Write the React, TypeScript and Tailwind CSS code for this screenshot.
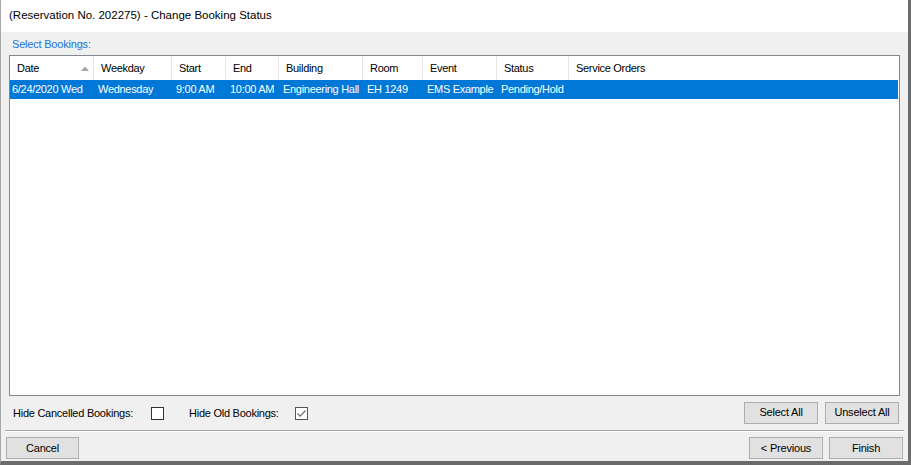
import React from "react";

const columns = [
  { key: "date", label: "Date", width: 84, sort: true },
  { key: "weekday", label: "Weekday", width: 78 },
  { key: "start", label: "Start", width: 54 },
  { key: "end", label: "End", width: 53 },
  { key: "building", label: "Building", width: 84 },
  { key: "room", label: "Room", width: 60 },
  { key: "event", label: "Event", width: 74 },
  { key: "status", label: "Status", width: 72 },
  { key: "orders", label: "Service Orders", width: 0 },
];

const bookings = [
  {
    id: 1,
    date: "6/24/2020 Wed",
    weekday: "Wednesday",
    start: "9:00 AM",
    end: "10:00 AM",
    building: "Engineering Hall",
    room: "EH 1249",
    event: "EMS Example",
    status: "Pending/Hold",
    orders: "",
  },
];

function WinButton({ label, width }: { label: string; width: string }) {
  return (
    <button
      className={`${width} h-[22px] border border-[#adadad] bg-[#e1e1e1] text-[11px] tracking-[-0.2px] text-black flex items-center justify-center`}
    >
      {label}
    </button>
  );
}

function CheckBox({ checked }: { checked?: boolean }) {
  return (
    <span
      className={`w-[13px] h-[13px] bg-white border flex items-center justify-center ${
        checked ? "border-[#555]" : "border-[#333]"
      }`}
    >
      {checked && (
        <svg width="11" height="11" viewBox="0 0 11 11">
          <path d="M1.5 5.5 L4.2 8.2 L9.5 2.5" fill="none" stroke="#6e6e6e" strokeWidth="1.2" />
        </svg>
      )}
    </span>
  );
}

export default function App() {
  return (
    <div
      className="w-[911px] h-[465px] flex flex-col bg-[#f0f0f0] border-l border-l-[#a8a8a8] border-r-[3px] border-r-[#6b6b6b] border-b-[4px] border-b-[#6b6b6b] text-black"
      style={{ fontFamily: '"Liberation Sans", Arial, sans-serif' }}
    >
      {/* Title */}
      <div className="h-[32px] bg-white flex items-center pl-[8px] text-[11.5px] shrink-0">
        (Reservation No. 202275) - Change Booking Status
      </div>

      {/* Body */}
      <div className="flex-1 flex flex-col px-[8px]">
        <div className="h-[23px] flex items-center pl-[3px] pt-[2px] text-[11px] tracking-[-0.2px] text-[#1a73d8]">
          Select Bookings:
        </div>

        {/* List */}
        <div className="h-[341px] bg-white border border-[#828790] flex flex-col">
          <div className="h-[24px] flex shrink-0">
            {columns.map((c) => (
              <div
                key={c.key}
                className={`relative flex items-center pl-[7px] text-[11px] tracking-[-0.3px] ${
                  c.width ? "border-r border-r-[#e5e5e5]" : "flex-1"
                }`}
                style={c.width ? { width: c.width } : undefined}
              >
                {c.label}
                {c.sort && (
                  <svg
                    className="absolute right-[4px] top-[10px]"
                    width="8"
                    height="5"
                    viewBox="0 0 8 5"
                  >
                    <path d="M0 5 L4 0.5 L8 5 Z" fill="#a6a6a6" />
                  </svg>
                )}
              </div>
            ))}
          </div>
          {bookings.map((b) => (
            <div key={b.id} className="h-[19px] flex bg-[#0078d7] text-white mr-[1px]">
              {columns.map((c, i) => (
                <div
                  key={c.key}
                  className={`flex items-center text-[11px] tracking-[-0.3px] whitespace-nowrap overflow-hidden ${
                    i === 0 ? "pl-[2px]" : "pl-[4px]"
                  } ${c.width ? "" : "flex-1"}`}
                  style={c.width ? { width: c.width } : undefined}
                >
                  {(b as Record<string, string | number>)[c.key]}
                </div>
              ))}
            </div>
          ))}
        </div>

        {/* Options row */}
        <div className="h-[34px] flex items-center text-[11px] tracking-[-0.25px]">
          <span className="ml-[4px] w-[138px]">Hide Cancelled Bookings:</span>
          <CheckBox />
          <span className="ml-[25px] w-[106px]">Hide Old Bookings:</span>
          <CheckBox checked />
          <div className="ml-auto flex gap-[7px] mr-[1px] mb-[1px]">
            <WinButton label="Select All" width="w-[74px]" />
            <WinButton label="Unselect All" width="w-[74px]" />
          </div>
        </div>
      </div>

      {/* Separator */}
      <div className="mx-[4px] h-[2px] border-t border-t-[#a0a0a0] border-b border-b-white shrink-0" />

      {/* Footer */}
      <div className="h-[30px] flex items-center px-[5px] shrink-0 pt-[2px]">
        <WinButton label="Cancel" width="w-[73px]" />
        <div className="ml-auto flex gap-[6px]">
          <WinButton label="< Previous" width="w-[74px]" />
          <WinButton label="Finish" width="w-[74px]" />
        </div>
      </div>
    </div>
  );
}
